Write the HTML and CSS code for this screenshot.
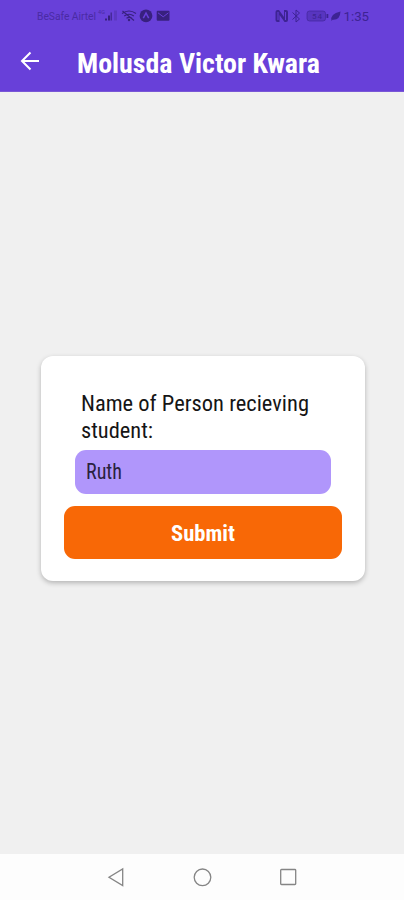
FILE: index.html
```
<!DOCTYPE html>
<html lang="en">
<head>
<meta charset="utf-8">
<meta name="viewport" content="width=device-width, initial-scale=1">
<title>Molusda Victor Kwara</title>
<link rel="stylesheet" href="styles.css">
</head>
<body>
<div class="screen">
  <header class="header">
    <div class="status">
      <svg class="status-left" width="134" height="16" viewBox="0 0 134 16">
        <text x="0" y="11.500" font-size="10" textLength="59" lengthAdjust="spacingAndGlyphs">BeSafe Airtel</text>
        <text class="net" x="61" y="6" font-size="5.5" textLength="7">4G</text>
        <path d="M68 12.500v-2h2v2zM71 12.500v-5h2v5z"/>
        <path opacity=".7" d="M73.500 12.500v-8h1.500v8z"/>
        <path opacity=".25" d="M77 12.500v-10h3v10z"/>
        <g fill="none" stroke="currentColor" stroke-width="1.200">
          <path d="M85 5.500q7-5 14 0M87.200 8q5-3.500 9.600 0M89.500 10.300q2.800-2 5.400 0M85.500 3l11.500 9.500"/>
        </g>
        <circle cx="92" cy="12" r="1.200"/>
        <circle cx="109" cy="7.800" r="6.400"/>
        <path class="knock" d="M106.300 10.200l2.700-5 2.700 5"/>
        <rect x="119.700" y="2.800" width="12.800" height="10" rx="1"/>
        <path class="knock thin" d="M121 4.800l5.200 4 5.200-4"/>
      </svg>
      <svg class="status-right" width="96" height="16" viewBox="0 0 96 16">
        <path d="M2.500 2H4l5 7V2h2q2 0 2 2v8q0 2-2 2H9.500l-5-7v7h-2q-2 0-2-2V4q0-2 2-2z"/>
        <path class="knock thin" d="M3 4v8M10.500 4v8"/>
        <path d="M17.500 4.500l7 6.500-3.500 3V2l3.500 3-7 6.500" fill="none" stroke="currentColor"/>
        <rect x="32" y="3" width="18.500" height="10" rx="2.500" fill="currentColor" fill-opacity=".35" stroke="currentColor" stroke-opacity=".6"/>
        <path d="M51.500 6h1.800v4h-1.800z"/>
        <text x="37" y="11" font-size="8" textLength="10">54</text>
        <path d="M56.500 13q-2-7 9-9.500-.5 9-8 8.300z"/>
        <text x="68.500" y="12.500" font-size="12.500" textLength="25.500" lengthAdjust="spacingAndGlyphs">1:35</text>
      </svg>
    </div>
    <div class="bar">
      <svg class="back" width="20" height="20" viewBox="0 0 20 20" fill="none" stroke="#fff" stroke-width="2">
        <path d="M19 10H2M10.500 1.500L2 10l8.500 8.500"/>
      </svg>
      <svg class="title" width="250" height="34"><text x="0" y="28.500" textLength="243" lengthAdjust="spacingAndGlyphs">Molusda Victor Kwara</text></svg>
    </div>
  </header>
  <main class="content">
    <section class="card">
      <svg class="label" width="240" height="54">
        <text x="0" y="20" textLength="228" lengthAdjust="spacingAndGlyphs">Name of Person recieving</text>
        <text x="0" y="46.500" textLength="72" lengthAdjust="spacingAndGlyphs">student:</text>
      </svg>
      <div class="field"><svg width="60" height="30"><text x="0" y="21.500" textLength="36" lengthAdjust="spacingAndGlyphs">Ruth</text></svg></div>
      <div class="submit"><svg width="64" height="30"><text x="0" y="22" textLength="64" lengthAdjust="spacingAndGlyphs">Submit</text></svg></div>
    </section>
  </main>
  <nav class="nav">
    <svg width="18" height="20" viewBox="0 0 18 20"><path d="M15.700 2v16.500L2 10.200z"/></svg>
    <svg width="20" height="20" viewBox="0 0 20 20"><circle cx="10.500" cy="10.300" r="8.300"/></svg>
    <svg width="18" height="18" viewBox="0 0 18 18"><rect x="1.700" y="1.500" width="15" height="15" rx=".8"/></svg>
  </nav>
</div>
</body>
</html>
```
FILE: styles.css
```
* { box-sizing: border-box; }
body {
  margin: 0;
  font-family: "Roboto Condensed", Roboto, sans-serif;
  font-stretch: condensed;
}
svg { display: block; flex: none; }
.screen {
  width: 404px;
  height: 900px;
  display: flex;
  flex-direction: column;
  background: #f0f0f0;
}
.header {
  height: 92px;
  background: #6840d9;
  border-bottom: 1px solid #7957d6;
}
.status {
  height: 31px;
  padding: 7.500px 33px 0 36.500px;
  display: flex;
  justify-content: space-between;
  color: #3d2393;
  font-family: Roboto, sans-serif;
  font-stretch: normal;
}
.status svg { fill: currentColor; }
.status-left { color: #38207f; }
.status-left text { fill: #4a2ba4; }
.status .knock { fill: none; stroke: #6840d9; stroke-width: 1.500; }
.status .thin { stroke-width: 1; }
.bar {
  height: 60px;
  padding-left: 20px;
  display: flex;
  align-items: center;
}
.title {
  margin-left: 37px;
  fill: #fff;
  font-size: 28px;
  font-weight: 700;
}
.content {
  flex: 1;
  padding: 263.500px 39.500px 0 40.500px;
}
.card {
  height: 225px;
  padding: 35.500px 22.500px 0 23px;
  border-radius: 12px;
  background: #fff;
  box-shadow: 0 2px 5px rgba(0, 0, 0, .25);
}
.label {
  margin-left: 17px;
  font-size: 22.500px;
  fill: #151515;
}
.field {
  height: 44px;
  margin: 5px 11px 0;
  padding: 7px 0 0 11.500px;
  border-radius: 11px;
  background: #b096fb;
}
.field svg { font-size: 21.500px; fill: #2a223e; }
.submit {
  height: 53px;
  margin-top: 12px;
  padding-top: 13px;
  display: flex;
  justify-content: center;
  border-radius: 11px;
  background: #f86806;
}
.submit svg { font-size: 22.500px; font-weight: 700; fill: #fff; }
.nav {
  height: 46.500px;
  padding: 1px 107px 0;
  display: flex;
  align-items: center;
  justify-content: space-between;
  background: #fdfdfd;
}
.nav svg { fill: none; stroke: #858585; stroke-width: 1.300; }
```
